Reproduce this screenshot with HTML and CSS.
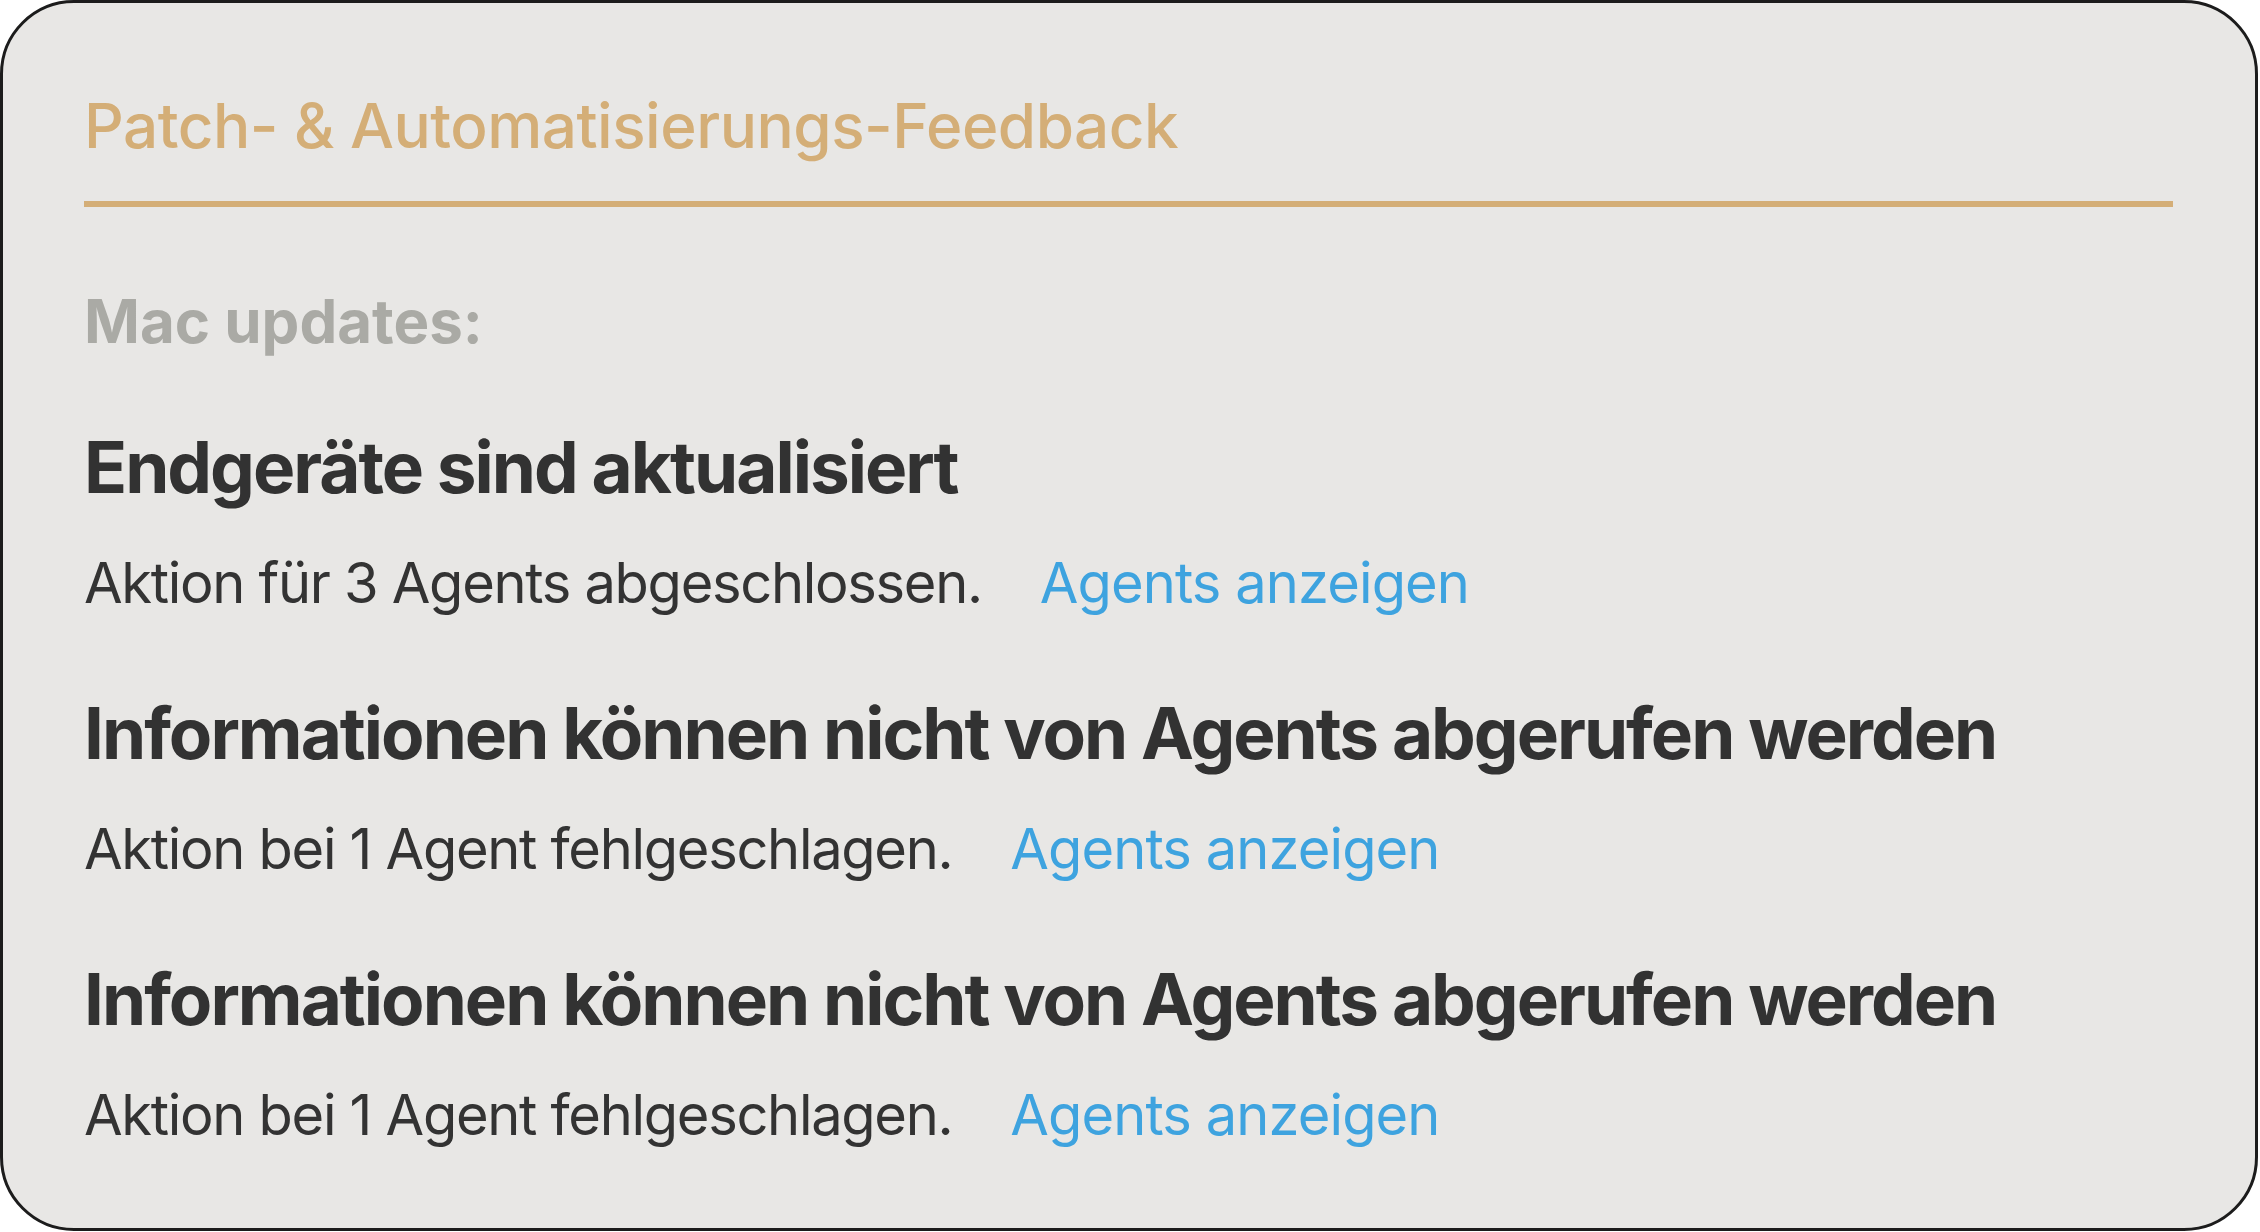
FILE: index.html
```html
<!DOCTYPE html>
<html lang="de">
<head>
<meta charset="utf-8">
<title>Patch- & Automatisierungs-Feedback</title>
<link rel="stylesheet" href="styles.css">
</head>
<body>
<div class="card">
  <h1 class="card-title">Patch- &amp; Automatisierungs-Feedback</h1>
  <div class="card-rule"></div>
  <p class="group-label">Mac updates:</p>
  <ul class="feedback-list">
    <li class="feedback-item">
      <h2 class="feedback-heading">Endgeräte sind aktualisiert</h2>
      <p class="feedback-meta">Aktion für 3 Agents abgeschlossen.<a class="feedback-link" href="#">Agents anzeigen</a></p>
    </li>
    <li class="feedback-item">
      <h2 class="feedback-heading">Informationen können nicht von Agents abgerufen werden</h2>
      <p class="feedback-meta">Aktion bei 1 Agent fehlgeschlagen.<a class="feedback-link" href="#">Agents anzeigen</a></p>
    </li>
    <li class="feedback-item">
      <h2 class="feedback-heading">Informationen können nicht von Agents abgerufen werden</h2>
      <p class="feedback-meta">Aktion bei 1 Agent fehlgeschlagen.<a class="feedback-link" href="#">Agents anzeigen</a></p>
    </li>
  </ul>
</div>
</body>
</html>
```

FILE: styles.css
```css
html, body {
  margin: 0;
  padding: 0;
  background: #ffffff;
}

body {
  font-family: Inter, Lato, "Liberation Sans", sans-serif;
  font-variant-ligatures: none;
  color: #333333;
}

.card {
  box-sizing: border-box;
  width: 2258px;
  height: 1231px;
  border: 3px solid #1c1c1c;
  border-radius: 74px;
  background: #e8e7e5;
  padding: 86px 82px 0 81px;
  display: flex;
  flex-direction: column;
}

.card-title {
  margin: 0;
  font-size: 62px;
  line-height: 74px;
  font-weight: 500;
  letter-spacing: -0.5px;
  color: #d4ae77;
}

.card-rule {
  margin-top: 38px;
  height: 6px;
  background: #d4ae77;
}

.group-label {
  margin: 78px 0 0;
  font-size: 60px;
  line-height: 72px;
  font-weight: 700;
  color: #aaaaa5;
}

.feedback-list {
  list-style: none;
  margin: 68px 0 0;
  padding: 0;
  display: flex;
  flex-direction: column;
  gap: 74px;
}

.feedback-item {
  display: flex;
  flex-direction: column;
  gap: 40px;
}

.feedback-heading {
  margin: 0;
  font-size: 71px;
  line-height: 85px;
  font-weight: 700;
  letter-spacing: -2px;
  color: #323232;
}

.feedback-meta {
  margin: 0;
  font-size: 56px;
  line-height: 67px;
  font-weight: 400;
  letter-spacing: -1.3px;
  color: #333333;
}

.feedback-link {
  margin-left: 58px;
  letter-spacing: -0.9px;
  color: #3ea3df;
  text-decoration: none;
}
```
